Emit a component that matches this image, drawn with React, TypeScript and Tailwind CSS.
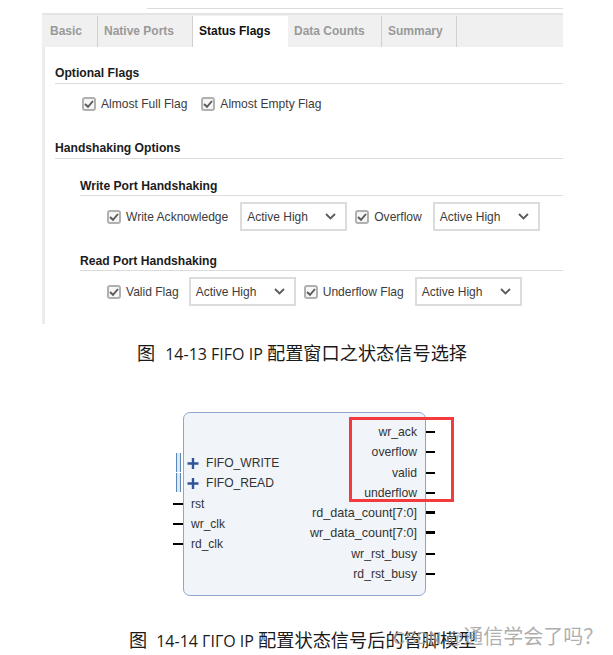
const sans = "font-['Liberation_Sans',Arial,sans-serif]"

function Check({ label }: { label: string }) {
  return (
    <div className="flex items-center gap-[5px]">
      <div className="w-[14px] h-[14px] rounded-[3px] border-2 border-[#b0b0b0] bg-[#f6f6f6] flex items-center justify-center">
        <svg width="10" height="10" viewBox="0 0 10 10" fill="none">
          <path d="M1 5 L4 7.8 L9 2" stroke="#5a5a5a" strokeWidth="1.9" />
        </svg>
      </div>
      <span className="text-[12.05px] leading-[14px] text-[#3c3c3c]">{label}</span>
    </div>
  )
}

function Select() {
  return (
    <div className="w-[107px] h-[29px] border-2 border-[#dcdcdc] flex items-center justify-between pl-[5px] pr-[9px]">
      <span className="text-[12px] text-[#3c3c3c]">Active High</span>
      <svg width="11" height="7" viewBox="0 0 11 7" fill="none">
        <path d="M1 1 L5.5 5.5 L10 1" stroke="#5a5a5a" strokeWidth="1.8" />
      </svg>
    </div>
  )
}

function Tab({ label, width, active }: { label: string; width: string; active?: boolean }) {
  return (
    <div
      className={
        active
          ? `h-[31px] ${width} bg-white flex items-center pl-[6px] pb-[1px] text-[12px] font-bold text-[#111]`
          : `h-[31px] ${width} flex items-center pb-[1px] text-[12px] font-bold text-[#999] border-r border-[#d0d0d0] pl-[6px]`
      }
    >
      {label}
    </div>
  )
}

function Heading({ label, indent }: { label: string; indent?: boolean }) {
  return (
    <div className={indent ? "ml-[25px] border-b border-[#dcdcdc] pb-[2px]" : "border-b border-[#dcdcdc] pb-[3px]"}>
      <p className="text-[12.15px] leading-[14px] font-bold text-[#1c1c1c]">{label}</p>
    </div>
  )
}

function OutPin({ label, bus }: { label: string; bus?: boolean }) {
  return (
    <div className="relative h-[20.3px] flex items-center justify-end pr-[8px]">
      <span className={bus ? "text-[12.6px] text-[#333]" : "text-[12.2px] text-[#333]"}>{label}</span>
      <div className={bus ? "absolute right-[-10px] top-[8px] w-[9px] h-[3px] bg-black" : "absolute right-[-10px] top-[9px] w-[9px] h-[2px] bg-black"} />
    </div>
  )
}

function InPin({ label }: { label: string }) {
  return (
    <div className="relative h-[20.3px] flex items-center pl-[7px]">
      <span className="text-[12px] text-[#333]">{label}</span>
      <div className="absolute left-[-11px] top-[9px] w-[10px] h-[2px] bg-black" />
    </div>
  )
}

function BusPin({ label }: { label: string }) {
  return (
    <div className="relative h-[20.3px] flex items-center pl-[3px] gap-[7px]">
      <svg width="12" height="13" viewBox="0 0 12 13">
        <path d="M6 1 V12 M0.5 6.5 H11.5" stroke="#2f5597" strokeWidth="2.4" />
      </svg>
      <span className="text-[12.1px] text-[#333]">{label}</span>
      <div className="absolute left-[-8px] top-[0px] w-[5px] h-[19px] border-x-[1.5px] border-[#5b86b8] bg-[#dbe7f3]" />
    </div>
  )
}

export default function App() {
  return (
    <div className={`relative w-[613px] h-[655px] bg-white overflow-hidden ${sans}`}>
      {/* config window */}
      <div className="ml-[42px] w-[521px] h-[324px] pt-[8px]">
        <div className="ml-[105px] h-px bg-[#dcdcdc]" />
        <div className="mt-[4px] h-[2px] bg-[#e4e4e4]" />
        <div className="h-[309px] border-l-[3px] border-[#ececec]">
          <div className="flex items-end h-[32px] bg-[#f0f0f0] -ml-[3px] pl-[2px]">
            <Tab label="Basic" width="w-[54px]" />
            <Tab label="Native Ports" width="w-[95px]" />
            <Tab label="Status Flags" width="w-[95px]" active />
            <Tab label="Data Counts" width="w-[94px]" />
            <Tab label="Summary" width="w-[75px]" />
          </div>

          <div className="pl-[10px] pt-[19px]">
            <Heading label="Optional Flags" />
            <div className="flex gap-[14px] ml-[27px] mt-[13px]">
              <Check label="Almost Full Flag" />
              <Check label="Almost Empty Flag" />
            </div>

            <div className="mt-[30px]">
              <Heading label="Handshaking Options" />
            </div>

            <div className="mt-[20px]">
              <Heading label="Write Port Handshaking" indent />
            </div>
            <div className="flex items-center ml-[52px] mt-[6px]">
              <Check label="Write Acknowledge" />
              <div className="ml-[12px]"><Select /></div>
              <div className="ml-[8px]"><Check label="Overflow" /></div>
              <div className="ml-[11px]"><Select /></div>
            </div>

            <div className="mt-[23px]">
              <Heading label="Read Port Handshaking" indent />
            </div>
            <div className="flex items-center ml-[52px] mt-[6px]">
              <Check label="Valid Flag" />
              <div className="ml-[10px]"><Select /></div>
              <div className="ml-[8px]"><Check label="Underflow Flag" /></div>
              <div className="ml-[11px]"><Select /></div>
            </div>
          </div>
        </div>
      </div>

      <p className="mt-[16px] ml-[137px] text-[18.2px] leading-[24px] text-[#1a1a1a] font-['Noto_Sans_CJK_SC',sans-serif] whitespace-nowrap">
        图<span className="ml-[10px] text-[16px] font-['Open_Sans',sans-serif]">14-13 FIFO IP </span>配置窗口之状态信号选择
      </p>

      {/* block symbol */}
      <div className="relative ml-[183px] mt-[46px] w-[243px] h-[184px] rounded-[7px] border border-[#8fa5cf] bg-[#f1f5fa] flex justify-between">
        <div className="w-[100px] pt-[40px]">
          <BusPin label="FIFO_WRITE" />
          <BusPin label="FIFO_READ" />
          <InPin label="rst" />
          <InPin label="wr_clk" />
          <InPin label="rd_clk" />
        </div>
        <div className="w-[130px] pt-[9px]">
          <OutPin label="wr_ack" />
          <OutPin label="overflow" />
          <OutPin label="valid" />
          <OutPin label="underflow" />
          <OutPin label="rd_data_count[7:0]" bus />
          <OutPin label="wr_data_count[7:0]" bus />
          <OutPin label="wr_rst_busy" />
          <OutPin label="rd_rst_busy" />
        </div>
      </div>

      {/* red highlight over the outputs */}
      <div className="absolute left-[349px] top-[417px] w-[105px] h-[85px] border-[3px] border-[#f23a3f]" />

      <p className="mt-[31px] ml-[129px] text-[18.2px] leading-[24px] text-[#1a1a1a] font-['Noto_Sans_CJK_SC',sans-serif] whitespace-nowrap">
        图<span className="ml-[9px] text-[16px] font-['Open_Sans',sans-serif]">14-14 ΓIΓO IP </span>配置状态信号后的管脚模型
      </p>

      {/* watermark */}
      <div className="absolute left-[393px] top-[623px] text-[20px] leading-[26px] text-[#a0a0a0]/85 font-['Noto_Sans_CJK_SC',sans-serif] whitespace-nowrap">
        <span className="text-[17px] font-['Liberation_Sans',sans-serif]">CSDN @</span>通信学会了吗？
      </div>
    </div>
  )
}
